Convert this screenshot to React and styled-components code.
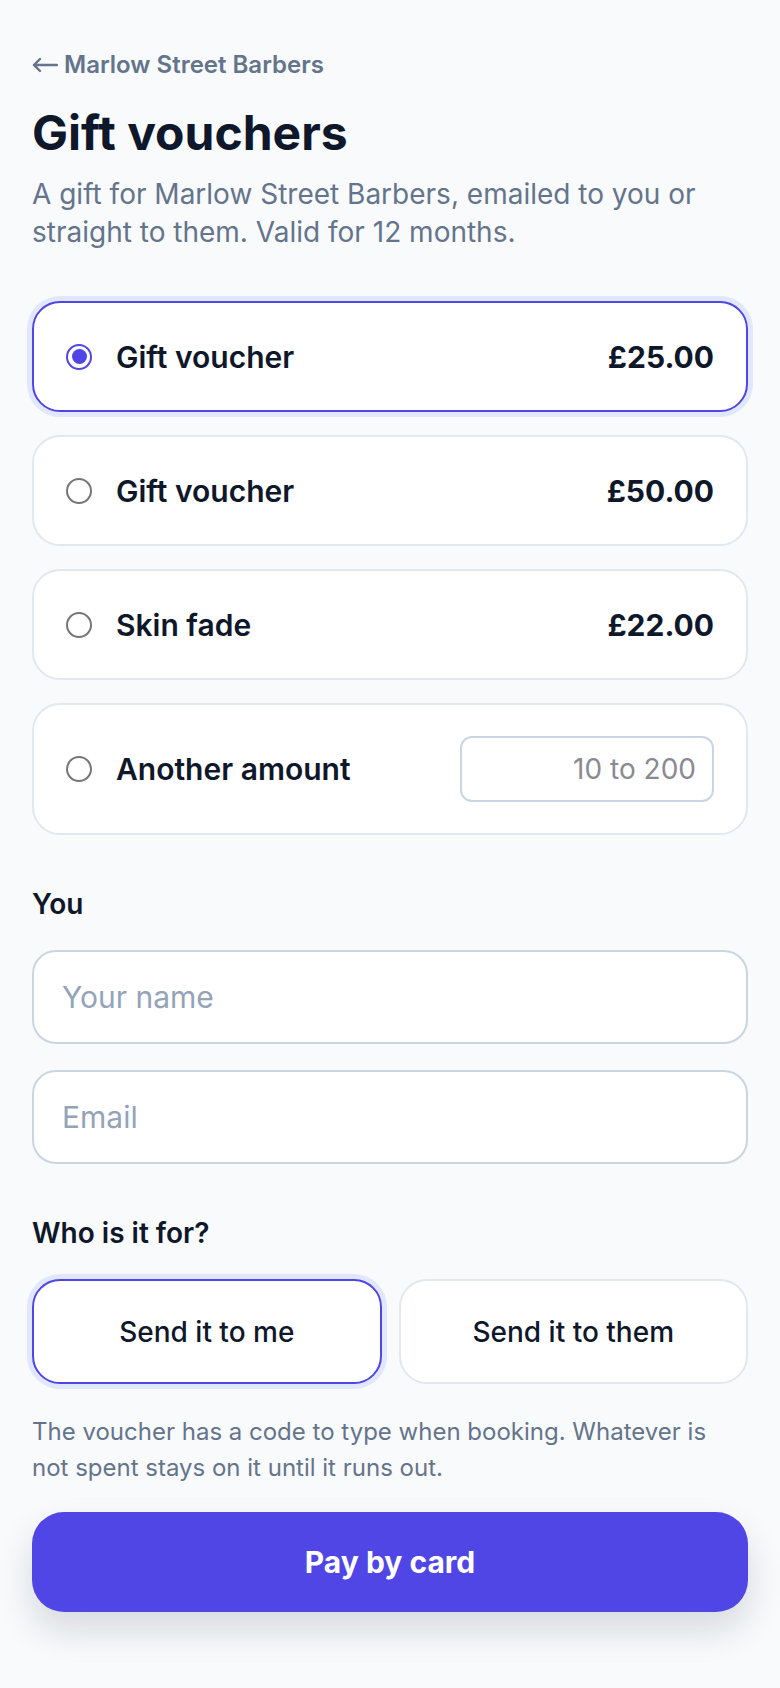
import React, { useState } from "react";
import styled, { createGlobalStyle } from "styled-components";

const GlobalStyle = createGlobalStyle`
  * {
    box-sizing: border-box;
  }

  html,
  body {
    margin: 0;
    padding: 0;
    background: #f8fafc;
  }

  body {
    font-family: "Inter", "Noto Sans", sans-serif;
    color: #0f172a;
    -webkit-font-smoothing: antialiased;
  }
`;

const Page = styled.main`
  min-height: 1688px;
  padding: 48px 32px 64px;
  display: flex;
  flex-direction: column;
`;

const BackLink = styled.a`
  display: inline-flex;
  align-items: center;
  gap: 6px;
  font-size: 24px;
  font-weight: 600;
  color: #64748b;
  text-decoration: none;
  line-height: 34px;
`;

const Title = styled.h1`
  margin: 22px 0 0;
  font-size: 48px;
  font-weight: 700;
  line-height: 58px;
  color: #0f172a;
`;

const Lead = styled.p`
  margin: 13px 0 0;
  font-size: 28px;
  line-height: 38px;
  color: #64748b;
`;

const OptionList = styled.div`
  margin-top: 50px;
  display: flex;
  flex-direction: column;
  gap: 23px;
`;

const OptionCard = styled.label`
  display: flex;
  align-items: center;
  gap: 24px;
  min-height: 111px;
  padding: 31px 32px;
  background: #fff;
  border: 2px solid ${(p) => (p.$active ? "#4f46e5" : "#e2e8f0")};
  border-radius: 28px;
  box-shadow: ${(p) => (p.$active ? "0 0 0 5px #e0e7ff" : "none")};
  cursor: pointer;
`;

const Radio = styled.span`
  flex: none;
  width: 26px;
  height: 26px;
  border-radius: 50%;
  border: 2px solid ${(p) => (p.$on ? "#4f46e5" : "#767676")};
  background: #fff;
  display: flex;
  align-items: center;
  justify-content: center;

  &::after {
    content: "";
    width: 15px;
    height: 15px;
    border-radius: 50%;
    background: ${(p) => (p.$on ? "#4f46e5" : "transparent")};
  }
`;

const OptionName = styled.span`
  flex: 1;
  font-size: 30px;
  font-weight: 600;
  color: #0f172a;
`;

const OptionPrice = styled.span`
  font-size: 30px;
  font-weight: 700;
  color: #0f172a;
`;

const AmountInput = styled.input`
  width: 254px;
  height: 66px;
  padding: 0 16px;
  border: 2px solid #cbd5e1;
  border-radius: 12px;
  background: #fff;
  font-family: inherit;
  font-size: 28px;
  text-align: right;
  color: #0f172a;
  outline: none;

  &::placeholder {
    color: #8a8a92;
  }
`;

const SectionLabel = styled.h2`
  margin: 50px 0 0;
  font-size: 28px;
  font-weight: 600;
  line-height: 39px;
  color: #0f172a;
`;

const FieldStack = styled.div`
  margin-top: 26px;
  display: flex;
  flex-direction: column;
  gap: 26px;
`;

const TextField = styled.input`
  width: 100%;
  height: 94px;
  padding: 0 28px;
  border: 2px solid #cbd5e1;
  border-radius: 24px;
  background: #fff;
  font-family: inherit;
  font-size: 30px;
  color: #0f172a;
  outline: none;

  &::placeholder {
    color: #94a3b8;
  }
`;

const ToggleRow = styled.div`
  margin-top: 26px;
  display: grid;
  grid-template-columns: 1fr 1fr;
  gap: 17px;
`;

const ToggleButton = styled.button`
  height: 105px;
  border: 2px solid ${(p) => (p.$active ? "#4f46e5" : "#e2e8f0")};
  border-radius: 28px;
  background: #fff;
  box-shadow: ${(p) => (p.$active ? "0 0 0 5px #e0e7ff" : "none")};
  font-family: inherit;
  font-size: 28px;
  font-weight: 500;
  color: #0f172a;
  cursor: pointer;
`;

const Note = styled.p`
  margin: 30px 0 0;
  font-size: 24px;
  line-height: 36px;
  color: #64748b;
`;

const PayButton = styled.button`
  margin-top: 26px;
  height: 100px;
  width: 100%;
  border: none;
  border-radius: 32px;
  background: #4f46e5;
  color: #fff;
  font-family: inherit;
  font-size: 30px;
  font-weight: 700;
  box-shadow: 0 18px 36px rgba(15, 23, 42, 0.14);
  cursor: pointer;
`;

const ArrowLeft = () => (
  <svg width="26" height="16" viewBox="0 0 26 16" fill="none" aria-hidden="true">
    <path
      d="M25 8H2M8 2L2 8l6 6"
      stroke="currentColor"
      strokeWidth="2.4"
      strokeLinecap="round"
      strokeLinejoin="round"
    />
  </svg>
);

const options = [
  { id: "v25", name: "Gift voucher", price: "£25.00" },
  { id: "v50", name: "Gift voucher", price: "£50.00" },
  { id: "fade", name: "Skin fade", price: "£22.00" },
];

export default function App() {
  const [choice, setChoice] = useState("v25");
  const [recipient, setRecipient] = useState("me");

  return (
    <>
      <GlobalStyle />
      <Page>
        <div>
          <BackLink href="#">
            <ArrowLeft />
            <span>Marlow Street Barbers</span>
          </BackLink>
        </div>
        <Title>Gift vouchers</Title>
        <Lead>
          A gift for Marlow Street Barbers, emailed to you or straight to them.
          Valid for 12 months.
        </Lead>

        <OptionList>
          {options.map((o) => (
            <OptionCard
              key={o.id}
              $active={choice === o.id}
              onClick={() => setChoice(o.id)}
            >
              <Radio $on={choice === o.id} />
              <OptionName>{o.name}</OptionName>
              <OptionPrice>{o.price}</OptionPrice>
            </OptionCard>
          ))}
          <OptionCard
            $active={choice === "other"}
            onClick={() => setChoice("other")}
          >
            <Radio $on={choice === "other"} />
            <OptionName>Another amount</OptionName>
            <AmountInput placeholder="10 to 200" inputMode="numeric" />
          </OptionCard>
        </OptionList>

        <SectionLabel>You</SectionLabel>
        <FieldStack>
          <TextField placeholder="Your name" />
          <TextField placeholder="Email" type="email" />
        </FieldStack>

        <SectionLabel>Who is it for?</SectionLabel>
        <ToggleRow>
          <ToggleButton
            $active={recipient === "me"}
            onClick={() => setRecipient("me")}
          >
            Send it to me
          </ToggleButton>
          <ToggleButton
            $active={recipient === "them"}
            onClick={() => setRecipient("them")}
          >
            Send it to them
          </ToggleButton>
        </ToggleRow>

        <Note>
          The voucher has a code to type when booking. Whatever is not spent
          stays on it until it runs out.
        </Note>

        <PayButton>Pay by card</PayButton>
      </Page>
    </>
  );
}
